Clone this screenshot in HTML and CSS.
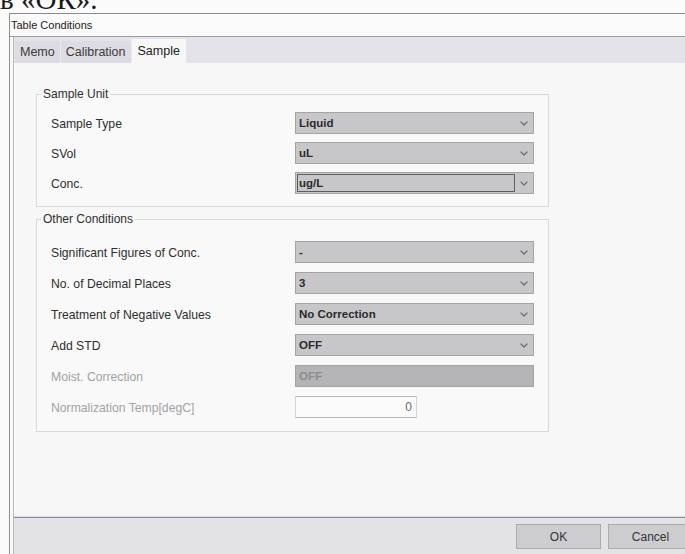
FILE: index.html
```html
<!DOCTYPE html>
<html lang="ru">
<head>
<meta charset="utf-8">
<title>Table Conditions</title>
<link rel="stylesheet" href="styles.css">
</head>
<body>
<div class="caption"><p class="caption-text">в «ОК».</p></div>

<div class="dialog">
  <div class="titlebar">Table Conditions</div>
  <div class="pane">
    <div class="tabs">
      <div class="tab">Memo</div>
      <div class="tab">Calibration</div>
      <div class="tab tab-active">Sample</div>
    </div>

    <div class="body">
      <fieldset class="group group-unit">
        <legend>Sample Unit</legend>
        <div class="rows">
          <div class="row">
            <span class="label">Sample Type</span>
            <div class="combo"><span class="combo-value">Liquid</span><svg class="chev" viewBox="0 0 8 5"><polyline points="0.6,0.6 4,4 7.4,0.6"/></svg></div>
          </div>
          <div class="row">
            <span class="label">SVol</span>
            <div class="combo"><span class="combo-value">uL</span><svg class="chev" viewBox="0 0 8 5"><polyline points="0.6,0.6 4,4 7.4,0.6"/></svg></div>
          </div>
          <div class="row">
            <span class="label">Conc.</span>
            <div class="combo combo-focus"><span class="combo-value">ug/L</span><span class="combo-button"><svg class="chev" viewBox="0 0 8 5"><polyline points="0.6,0.6 4,4 7.4,0.6"/></svg></span></div>
          </div>
        </div>
      </fieldset>

      <fieldset class="group group-other">
        <legend>Other Conditions</legend>
        <div class="rows">
          <div class="row">
            <span class="label">Significant Figures of Conc.</span>
            <div class="combo"><span class="combo-value">-</span><svg class="chev" viewBox="0 0 8 5"><polyline points="0.6,0.6 4,4 7.4,0.6"/></svg></div>
          </div>
          <div class="row">
            <span class="label">No. of Decimal Places</span>
            <div class="combo"><span class="combo-value">3</span><svg class="chev" viewBox="0 0 8 5"><polyline points="0.6,0.6 4,4 7.4,0.6"/></svg></div>
          </div>
          <div class="row">
            <span class="label">Treatment of Negative Values</span>
            <div class="combo"><span class="combo-value">No Correction</span><svg class="chev" viewBox="0 0 8 5"><polyline points="0.6,0.6 4,4 7.4,0.6"/></svg></div>
          </div>
          <div class="row">
            <span class="label">Add STD</span>
            <div class="combo"><span class="combo-value">OFF</span><svg class="chev" viewBox="0 0 8 5"><polyline points="0.6,0.6 4,4 7.4,0.6"/></svg></div>
          </div>
          <div class="row row-disabled">
            <span class="label">Moist. Correction</span>
            <div class="combo combo-disabled"><span class="combo-value">OFF</span></div>
          </div>
          <div class="row row-disabled">
            <span class="label">Normalization Temp[degC]</span>
            <div class="field">0</div>
          </div>
        </div>
      </fieldset>
    </div>

    <div class="footer">
      <button class="btn">OK</button>
      <button class="btn">Cancel</button>
    </div>
  </div>
</div>
</body>
</html>
```

FILE: styles.css
```css
html, body {
  margin: 0;
  padding: 0;
  height: 100%;
}

body {
  background: #fbfbfb;
  font-family: "Liberation Sans", Arial, sans-serif;
  color: #2e2e2e;
  overflow: hidden;
}

/* tail of the paragraph line above the dialog */
.caption {
  height: 13px;
  overflow: hidden;
}

.caption-text {
  margin: -15px 0 0 0;
  font-family: "Liberation Serif", "Times New Roman", serif;
  font-size: 29px;
  line-height: 28px;
  color: #1a1a1a;
  white-space: nowrap;
}

/* dialog window */
.dialog {
  margin-left: 9px;
  width: 690px;
  height: 541px;
  border-top: 1px solid #8a8a8a;
  border-left: 1px solid #8f8f8f;
  background: #f9f9f9;
  display: flex;
  flex-direction: column;
}

.titlebar {
  height: 22px;
  line-height: 22px;
  padding-left: 1px;
  font-size: 11px;
  color: #222;
  border-bottom: 1px solid #9c9c9c;
  background: #fafafa;
}

.pane {
  flex: 1;
  margin-left: 3px;
  border-left: 1px solid #b9b9b9;
  display: flex;
  flex-direction: column;
}

/* tab strip */
.tabs {
  height: 26px;
  background: #e3e3e9;
  display: flex;
  align-items: flex-end;
  padding-left: 1px;
}

.tab {
  height: 22px;
  line-height: 22px;
  padding: 0 5px;
  font-size: 12.5px;
  color: #3a3a3a;
  background: #dcdce2;
  border-right: 1px solid #ececf0;
  box-sizing: border-box;
}

.tab-active {
  height: 24px;
  line-height: 24px;
  padding: 0 6px 0 6px;
  background: #f7f7f7;
  color: #222;
  border-right: none;
}

/* page content */
.body {
  flex: 1;
  background: #f7f7f7;
  padding-left: 22px;
  overflow: hidden;
}

.group {
  width: 511px;
  box-sizing: border-box;
  margin: 0;
  padding: 11px 14px 12px 14px;
  border: 1px solid #d9d9d9;
  background: #f9f9f9;
}

.group-unit {
  margin-top: 24px;
}

.group-other {
  margin-top: 5px;
  padding-top: 15px;
  padding-bottom: 13px;
}

.group legend {
  margin-left: -10px;
  padding: 0 2px;
  font-size: 12px;
  line-height: 14px;
  color: #2e2e2e;
}

.rows {
  display: flex;
  flex-direction: column;
  gap: 8px;
}

.group-other .rows {
  gap: 9px;
}

.row {
  display: grid;
  grid-template-columns: 244px 239px;
  align-items: center;
  height: 22px;
}

.label {
  padding-top: 2px;
  font-size: 12.2px;
  color: #2e2e2e;
  white-space: nowrap;
}

.row-disabled .label {
  color: #a2a2a2;
}

/* drop-down boxes */
.combo {
  height: 22px;
  box-sizing: border-box;
  border: 1px solid #a4a4a4;
  background: #c7c7c9;
  display: flex;
  align-items: center;
  justify-content: space-between;
}

.combo-value {
  padding-left: 3px;
  font-size: 11.5px;
  font-weight: bold;
  color: #2b2b2b;
}

.chev {
  width: 8px;
  height: 5px;
  margin-right: 5px;
  fill: none;
  stroke: #6c6c6c;
  stroke-width: 1.3;
}

.combo-focus .combo-value {
  flex: 1;
  align-self: stretch;
  margin: 1px 0 1px 1px;
  padding-left: 1px;
  line-height: 17px;
  border: 1px solid #5e5e5e;
}

.combo-button {
  width: 18px;
  align-self: stretch;
  display: flex;
  align-items: center;
  justify-content: center;
}

.combo-button .chev {
  margin-right: 0;
}

.combo-disabled {
  background: #b4b4b6;
  border-color: #a2a2a2;
}

.combo-disabled .combo-value {
  color: #8c8c8c;
}

/* numeric entry */
.field {
  width: 122px;
  height: 22px;
  box-sizing: border-box;
  border: 1px solid #b4b4b4;
  border-left-color: #d6d6d6;
  border-right-color: #d6d6d6;
  background: #fbfbfb;
  font-size: 12px;
  line-height: 20px;
  text-align: right;
  padding-right: 4px;
  color: #6a6a6a;
}

/* button bar */
.footer {
  height: 38px;
  box-sizing: border-box;
  border-top: 1px solid #8c8c8c;
  box-shadow: 0 -1px 0 #dcdce0;
  background: #e2e2e7;
  display: flex;
  justify-content: flex-end;
  align-items: flex-start;
  gap: 7px;
  padding: 6px 7px 0 0;
}

.btn {
  width: 85px;
  height: 25px;
  margin: 0;
  border: 1px solid #ababae;
  background: #cdcdd1;
  font-family: "Liberation Sans", Arial, sans-serif;
  font-size: 12px;
  color: #333;
  padding: 0;
}
```
